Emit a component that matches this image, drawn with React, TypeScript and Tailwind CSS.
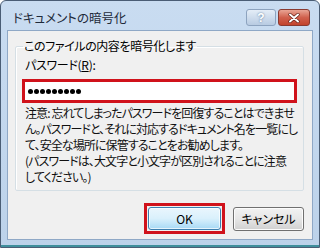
import React from 'react';

const jp = { fontFamily: '"Noto Sans CJK JP", "Noto Sans", sans-serif', fontFeatureSettings: '"palt"' };

const PasswordDots = ({ count }: { count: number }) => (
  <div className="flex items-center gap-[1px]">
    {Array.from({ length: count }).map((_, i) => (
      <span key={i} className="w-[5px] h-[5px] rounded-full bg-black" />
    ))}
  </div>
);

export default function App() {
  const notes = [
    '注意: 忘れてしまったパスワードを回復することはできませ',
    'ん。パスワードと、それに対応するドキュメント名を一覧にし',
    'て、安全な場所に保管することをお勧めします。',
    '(パスワードは、大文字と小文字が区別されることに注意',
    'してください。)',
  ];

  return (
    <div
      className="w-[320px] h-[248px] flex flex-col overflow-hidden rounded-t-[6px] border border-[#4a5d75] bg-gradient-to-b from-[#c9dcf1] to-[#bcd2ea] text-[12px] text-black"
      style={jp}
    >
      {/* Title bar */}
      <div className="h-[29px] shrink-0 flex items-start justify-between pl-[12px] pr-[9px]">
        <span className="mt-[8px] text-[12.5px] leading-[18px] text-[#1e2a3a]">ドキュメントの暗号化</span>
        <div className="mt-[8px] flex gap-[2px]">
          <div className="w-[30px] h-[17px] rounded-[3px] border border-[#8da3bf] bg-gradient-to-b from-[#e4edf7] to-[#b8cbe2] flex items-center justify-center text-[12px] font-bold leading-none text-white [text-shadow:0_0_2px_#4a6a90]" style={{ fontFamily: '"Liberation Sans", sans-serif' }}>
            ?
          </div>
          <div className="w-[32px] h-[17px] rounded-[3px] border border-[#8a3a30] bg-gradient-to-b from-[#e8a494] via-[#d0604d] to-[#c2432c] flex items-center justify-center">
            <svg width="12" height="10" viewBox="0 0 12 10">
              <path d="M2 1.5 L10 8.5 M10 1.5 L2 8.5" stroke="#5a1a12" strokeWidth="3.2" strokeLinecap="round" />
              <path d="M2 1.5 L10 8.5 M10 1.5 L2 8.5" stroke="#ffffff" strokeWidth="2" strokeLinecap="round" />
            </svg>
          </div>
        </div>
      </div>

      {/* Client area */}
      <div className="flex-1 mx-[6px] border border-[#8fa8c6] bg-[#f0f0f0] flex flex-col pl-[7px] pr-[8px] pt-[8px]">
        <fieldset className="min-w-0 border border-[#d5dfe5] rounded-[2px] pl-[6px] pr-[6px] pb-[6px] h-[152px] shadow-[inset_1px_1px_0_#ffffff]">
          <legend className="ml-[1px] px-[1px] leading-[14px] tracking-[-0.4px]">このファイルの内容を暗号化します</legend>
          <div className="mt-[5px] ml-[3px] leading-[14px] tracking-[-0.3px]">
            パスワード(<span className="underline">R</span>):
          </div>
          <div className="mt-[7px] h-[24px] border-[3px] border-[#d0121b] bg-white flex items-center pl-[3px]">
            <PasswordDots count={9} />
          </div>
          <div className="mt-[2px] ml-[3px] leading-[16px] whitespace-nowrap tracking-[-0.9px] text-[#111]">
            {notes.map((n, i) => (
              <div key={i}>{n}</div>
            ))}
          </div>
        </fieldset>

        <div className="flex justify-end items-center gap-[8px] mt-[12px]">
          <div className="border-[3px] border-[#d0121b] p-[1px]">
            <button className="w-[73px] h-[23px] rounded-[3px] border border-[#3c7fb1] bg-gradient-to-b from-[#eaf6fd] via-[#d9f0fc] to-[#a7d9f5] shadow-[inset_0_0_0_1px_#ffffffb0] leading-none">
              OK
            </button>
          </div>
          <button className="w-[71px] h-[24px] rounded-[3px] border border-[#707070] bg-gradient-to-b from-[#f2f2f2] via-[#e6e6e6] to-[#d0d0d0] shadow-[inset_0_0_0_1px_#fcfcfc] leading-none">
            キャンセル
          </button>
        </div>
      </div>

      {/* Bottom frame */}
      <div className="h-[7px] shrink-0 border-b-2 border-[#3f8f9c]" />
    </div>
  );
}
